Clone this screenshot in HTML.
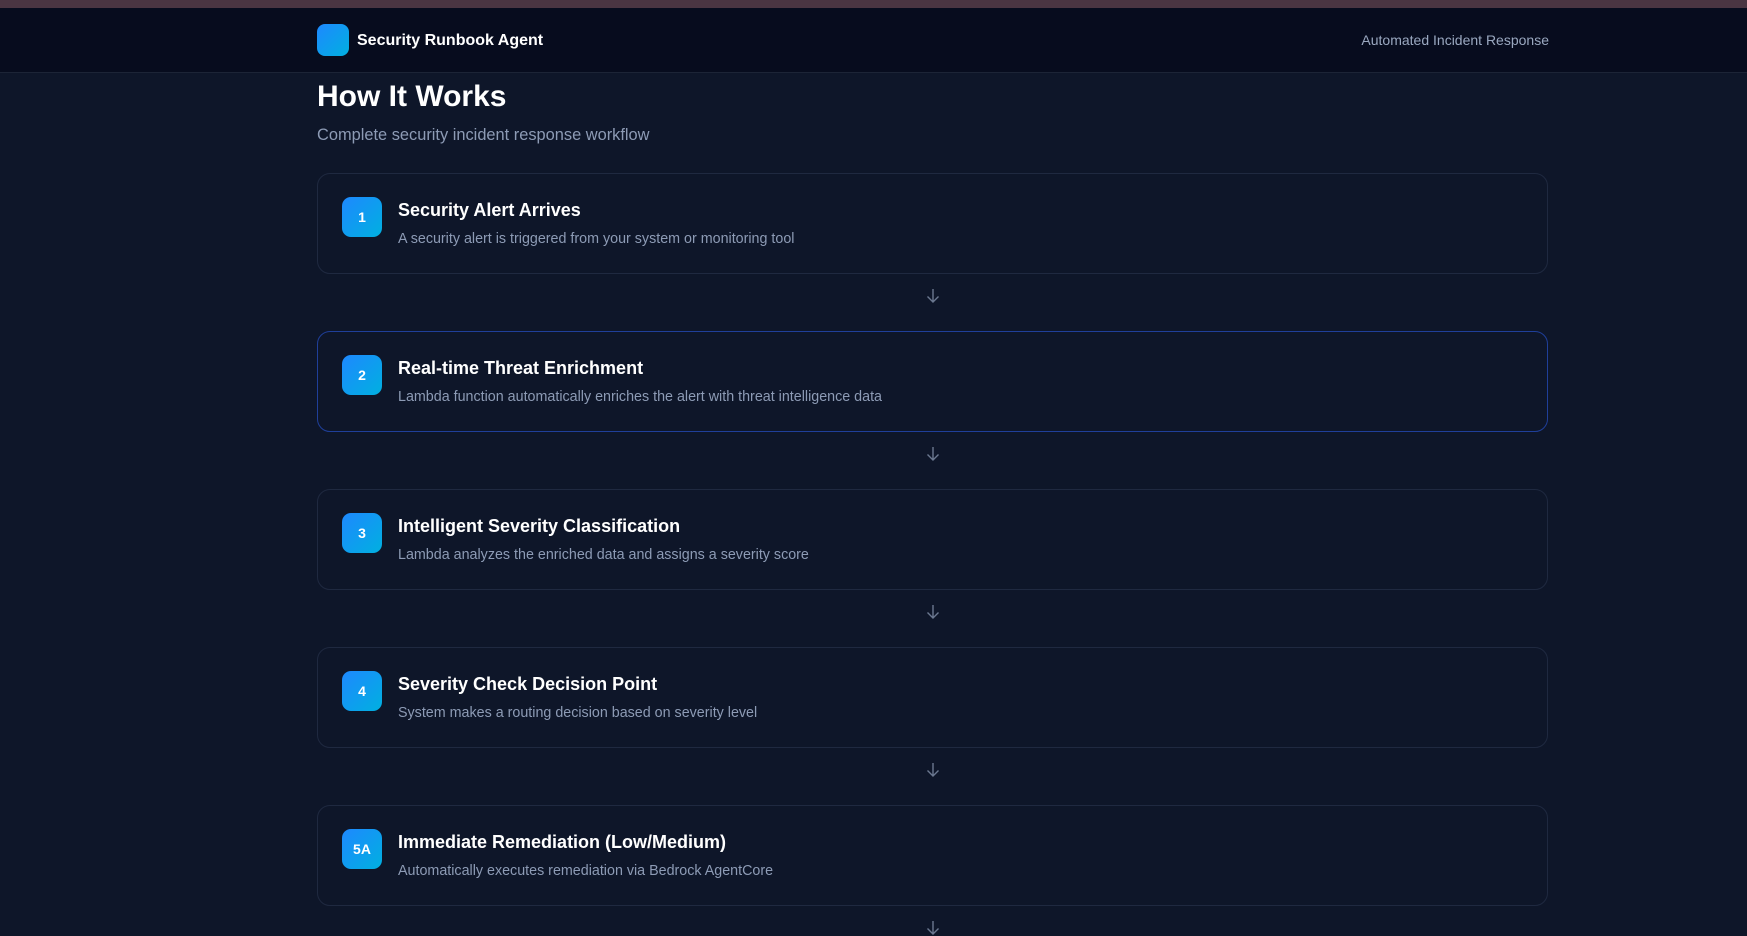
<!DOCTYPE html>
<html><head><meta charset="utf-8"><style>
*{margin:0;padding:0;box-sizing:border-box}
body{width:1747px;height:931px;overflow:hidden;background:#0e1629;font-family:"Liberation Sans",sans-serif;}
.topbar{height:8px;background:#4a3542}
.hdr{height:65px;background:#070c1e;border-bottom:1px solid #1c2436;position:relative}
.logo{position:absolute;left:317px;top:16px;width:32px;height:32px;border-radius:8px;background:linear-gradient(135deg,#1e88ff,#00b0e0)}
.brand{position:absolute;left:357px;top:24px;color:#fff;font-weight:bold;font-size:16px}
.tag{position:absolute;right:198px;top:24px;color:#9aa8c0;font-size:14px}
h1{position:absolute;left:317px;top:80px;color:#fff;font-size:30px;font-weight:bold}
.sub{position:absolute;left:317px;top:126px;color:#8d9bb5;font-size:16.4px}
.card{position:absolute;left:317px;width:1231px;height:101px;border:1px solid #1f2940;border-radius:13px;background:#0e1629}
.card.act{border-color:#1f3f9a}
.badge{position:absolute;left:24px;top:23px;width:40px;height:40px;border-radius:9px;background:linear-gradient(135deg,#1e88ff,#00b0e0);color:#fff;font-weight:bold;font-size:14px;text-align:center;line-height:40px}
.t{position:absolute;left:80px;top:26px;color:#fff;font-weight:bold;font-size:18px}
.d{position:absolute;left:80px;top:57px;color:#8d9bb5;font-size:14.3px}
.arr{position:absolute;left:925px;width:16px;height:16px}
</style></head><body>
<div class="topbar"></div>
<div class="hdr"><div class="logo"></div><div class="brand">Security Runbook Agent</div><div class="tag">Automated Incident Response</div></div>
<h1>How It Works</h1>
<div class="sub">Complete security incident response workflow</div>

<div class="card" style="top:173px"><div class="badge">1</div><div class="t">Security Alert Arrives</div><div class="d">A security alert is triggered from your system or monitoring tool</div></div>
<svg class="arr" style="top:288px" viewBox="0 0 16 16"><path d="M8 1v13M2.5 8.5l5.5 5.5 5.5-5.5" stroke="#6b7890" stroke-width="1.4" fill="none"/></svg>
<div class="card act" style="top:331px"><div class="badge">2</div><div class="t">Real-time Threat Enrichment</div><div class="d">Lambda function automatically enriches the alert with threat intelligence data</div></div>
<svg class="arr" style="top:446px" viewBox="0 0 16 16"><path d="M8 1v13M2.5 8.5l5.5 5.5 5.5-5.5" stroke="#6b7890" stroke-width="1.4" fill="none"/></svg>
<div class="card" style="top:489px"><div class="badge">3</div><div class="t">Intelligent Severity Classification</div><div class="d">Lambda analyzes the enriched data and assigns a severity score</div></div>
<svg class="arr" style="top:604px" viewBox="0 0 16 16"><path d="M8 1v13M2.5 8.5l5.5 5.5 5.5-5.5" stroke="#6b7890" stroke-width="1.4" fill="none"/></svg>
<div class="card" style="top:647px"><div class="badge">4</div><div class="t">Severity Check Decision Point</div><div class="d">System makes a routing decision based on severity level</div></div>
<svg class="arr" style="top:762px" viewBox="0 0 16 16"><path d="M8 1v13M2.5 8.5l5.5 5.5 5.5-5.5" stroke="#6b7890" stroke-width="1.4" fill="none"/></svg>
<div class="card" style="top:805px"><div class="badge">5A</div><div class="t">Immediate Remediation (Low/Medium)</div><div class="d">Automatically executes remediation via Bedrock AgentCore</div></div>
<svg class="arr" style="top:920px" viewBox="0 0 16 16"><path d="M8 1v13M2.5 8.5l5.5 5.5 5.5-5.5" stroke="#6b7890" stroke-width="1.4" fill="none"/></svg>
</body></html>
